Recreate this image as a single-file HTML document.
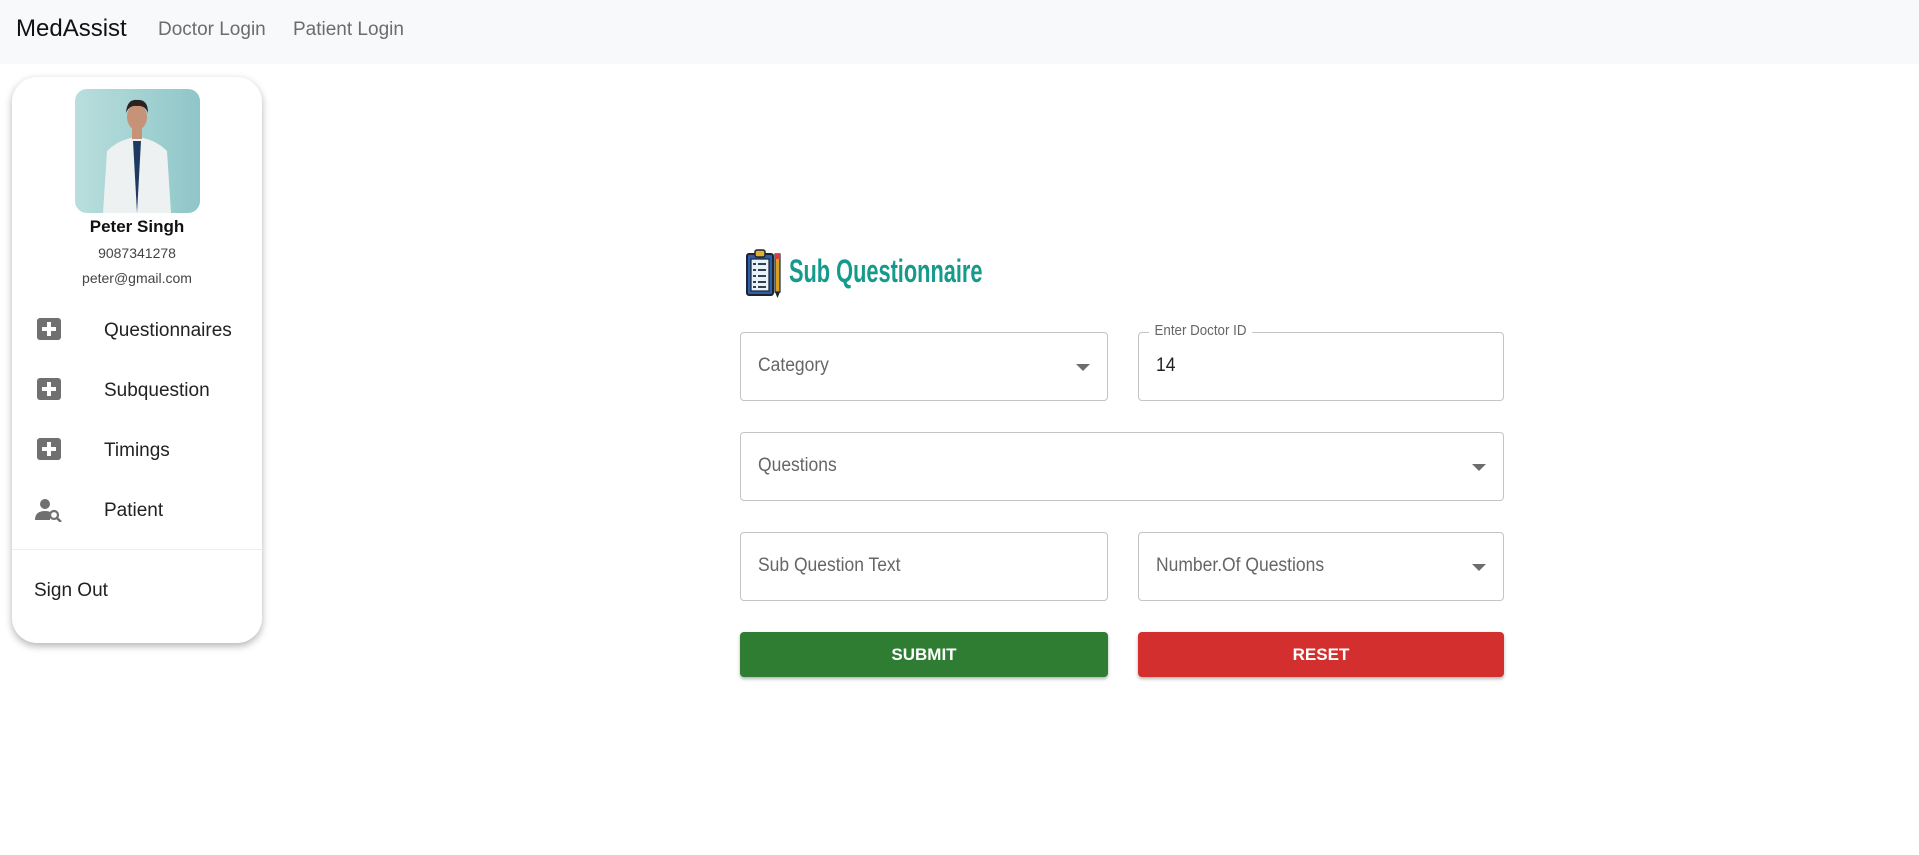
<!DOCTYPE html>
<html><head><meta charset="utf-8"><style>
*{box-sizing:border-box;margin:0;padding:0}
body{width:1919px;height:855px;background:#fff;font-family:"Liberation Sans",sans-serif;position:relative;overflow:hidden;color:#212529}
.nav{position:absolute;left:0;top:0;width:1919px;height:64px;background:#f8f9fa}
.brand{position:absolute;left:16px;top:15px;font-size:24px;color:#111}
.nl{position:absolute;top:19px;font-size:19px;color:#6c6c6c}
.card{position:absolute;left:12px;top:77px;width:250px;height:566px;background:#fff;border-radius:25px;box-shadow:0 3px 8px rgba(0,0,0,.3)}
.photo{position:absolute;left:63px;top:12px;width:125px;height:124px;border-radius:12px;background:linear-gradient(90deg,#b9dedd,#8fc6c8);overflow:hidden}
.c{position:absolute;width:250px;text-align:center;left:0}
.mi{position:absolute;left:92px;font-size:19px;color:#222}
.ic{position:absolute;left:25px;width:24px;height:22px;background:#707070;border-radius:3px}
.ic:before{content:"";position:absolute;left:10px;top:4px;width:4px;height:14px;background:#fff}
.ic:after{content:"";position:absolute;left:5px;top:9px;width:14px;height:4px;background:#fff}
.f{position:absolute;border:1px solid #c4c4c4;border-radius:4px;height:69px}
.f span{position:absolute;left:17px;top:22px;font-size:19px;color:#666;transform:scaleX(.92);transform-origin:left}
.arr{position:absolute;right:17px;top:31px;width:0;height:0;border-left:7px solid transparent;border-right:7px solid transparent;border-top:7px solid #6d6d6d}
.btn{position:absolute;top:632px;height:45px;border-radius:4px;color:#fff;font-weight:bold;font-size:17px;text-align:center;line-height:45px;box-shadow:0 2px 3px rgba(0,0,0,.3)}
</style></head><body>
<div class="nav"><div class="brand">MedAssist</div><div class="nl" style="left:158px">Doctor Login</div><div class="nl" style="left:293px">Patient Login</div></div>
<div class="card">
<div class="photo"><svg width="125" height="124" viewBox="0 0 125 124">
<path d="M28 124 L32 62 Q44 50 62 48 Q80 50 92 62 L96 124Z" fill="#eef1f1"/>
<path d="M58 52 L62 124 L66 52Z" fill="#1e3a60"/>
<ellipse cx="62" cy="28" rx="10" ry="13" fill="#c69278"/>
<path d="M51 24 Q52 10 62 11 Q73 10 73 24 Q70 16 62 17 Q54 16 51 24Z" fill="#2a2220"/>
<rect x="57" y="38" width="10" height="12" fill="#c69278"/>
</svg></div>
<div class="c" style="top:140px;font-weight:bold;font-size:17px;color:#111">Peter Singh</div>
<div class="c" style="top:168px;font-size:14px;color:#444">9087341278</div>
<div class="c" style="top:193px;font-size:14px;color:#444">peter@gmail.com</div>
<div class="ic" style="top:241px"></div><div class="mi" style="top:243px">Questionnaires</div>
<div class="ic" style="top:301px"></div><div class="mi" style="top:303px">Subquestion</div>
<div class="ic" style="top:361px"></div><div class="mi" style="top:363px">Timings</div>
<svg style="position:absolute;left:23px;top:421px" width="28" height="24" viewBox="0 0 28 24"><circle cx="10" cy="6" r="5" fill="#707070"/><path d="M0 22 Q0 13 10 13 Q14 13 15 14 L15 22Z" fill="#707070"/><circle cx="19" cy="17" r="4" fill="none" stroke="#707070" stroke-width="2.2"/><path d="M22 20 L26 24" stroke="#707070" stroke-width="2.5"/></svg>
<div class="mi" style="top:423px">Patient</div>
<div style="position:absolute;left:0;top:472px;width:250px;height:1px;background:#eee"></div>
<div style="position:absolute;left:22px;top:503px;font-size:19px;color:#222">Sign Out</div>
</div>
<svg style="position:absolute;left:746px;top:248px" width="36" height="50" viewBox="0 0 36 50">
<rect x="1" y="6" width="26" height="41" rx="2" fill="#2f5fa8" stroke="#1b2433" stroke-width="2"/>
<rect x="5" y="11" width="18" height="32" fill="#e8f2fb" stroke="#1b2433" stroke-width="1.2"/>
<rect x="9" y="2" width="10" height="7" rx="2" fill="#e0b030" stroke="#1b2433" stroke-width="1.5"/>
<path d="M7 16h3M12 16h8M7 22h3M12 22h8M7 28h3M12 28h8M7 34h3M12 34h8M7 39h3M12 39h8" stroke="#1b2433" stroke-width="1.8"/>
<rect x="29" y="6" width="5" height="38" fill="#d9a020" stroke="#1b2433" stroke-width="1.2"/>
<rect x="29" y="6" width="5" height="5" fill="#e53935"/>
<path d="M29 44 L31.5 50 L34 44Z" fill="#1b2433"/>
</svg>
<div style="position:absolute;left:789px;top:253px;font-size:32px;font-weight:bold;color:#169a8c;transform:scaleX(.68);transform-origin:left;white-space:nowrap">Sub Questionnaire</div>
<div class="f" style="left:740px;top:332px;width:368px"><span>Category</span><div class="arr"></div></div>
<div class="f" style="left:1138px;top:332px;width:366px"><div style="position:absolute;left:10px;top:-10px;background:#fff;padding:0 6px;font-size:14.5px;color:#666;transform:scaleX(.92);transform-origin:left">Enter Doctor ID</div><span style="color:#222">14</span></div>
<div class="f" style="left:740px;top:432px;width:764px"><span>Questions</span><div class="arr"></div></div>
<div class="f" style="left:740px;top:532px;width:368px"><span>Sub Question Text</span></div>
<div class="f" style="left:1138px;top:532px;width:366px"><span>Number.Of Questions</span><div class="arr"></div></div>
<div class="btn" style="left:740px;width:368px;background:#2e7d32">SUBMIT</div>
<div class="btn" style="left:1138px;width:366px;background:#d32f2f">RESET</div>
</body></html>
